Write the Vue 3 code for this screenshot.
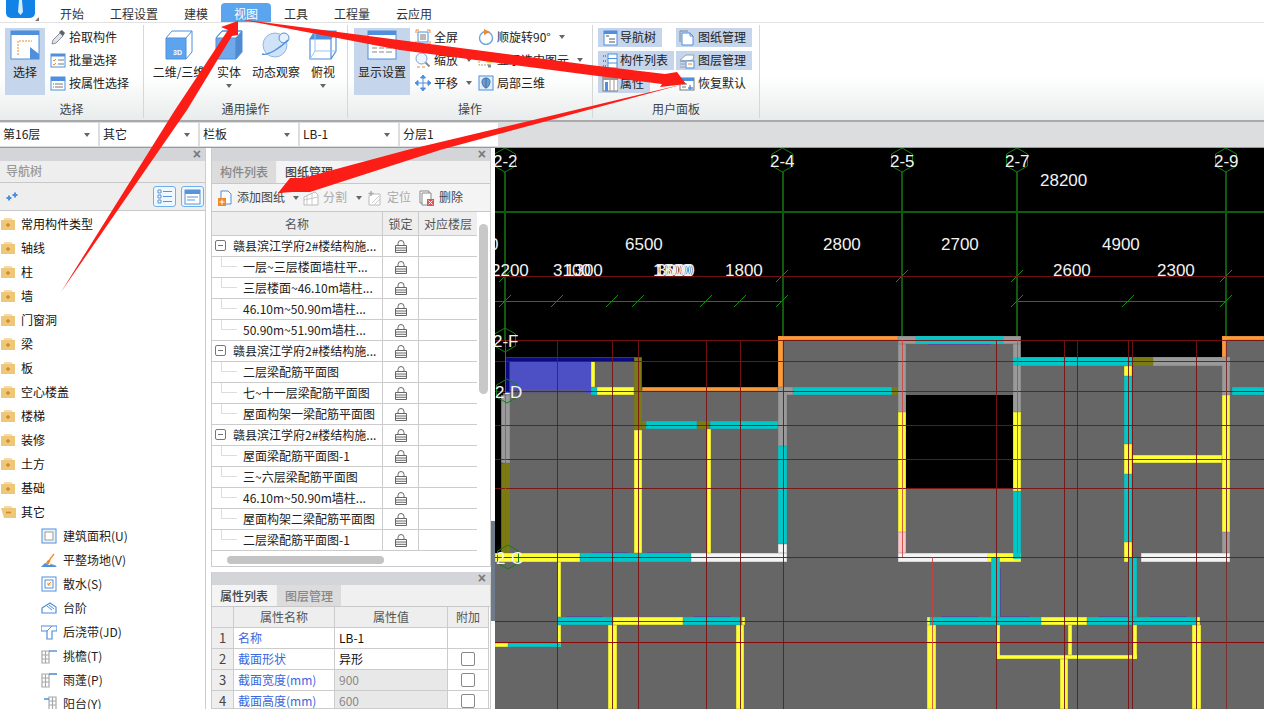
<script setup>
const tabs = ['开始', '工程设置', '建模', '视图', '工具', '工程量', '云应用']
const combos = ['第16层', '其它', '栏板', 'LB-1', '分层1']

const B = '#4f8fdc'
const O = '#ee8a2a'
const icons = {
  select: `<rect x="1" y="1" width="28" height="28" fill="#fff" stroke="${B}"/><rect x="1" y="1" width="28" height="4" fill="${B}"/><path d="M8 25V11h14" fill="none" stroke="${O}" stroke-dasharray="2 1"/><path d="M20 17l9 7v5h-9z" fill="${B}"/>`,
  cube3d: `<path d="M2 8h20v21H2z" fill="#5ea3ee" stroke="${B}"/><path d="M2 8l6-7h20v21l-6 7M22 8l6-7" fill="none" stroke="${B}"/><text x="9" y="25" font-size="7" font-weight="700" fill="#fff" font-family="Liberation Sans, sans-serif">3D</text>`,
  solid: `<path d="M2 8h20v21H2z" fill="#6fa9ea" stroke="${B}"/><path d="M2 8l6-7h20v21l-6 7V8l6-7H8z" fill="#4f8ad0" stroke="${B}"/>`,
  orbit: `<circle cx="14" cy="15" r="12" fill="#cfe2f6" stroke="#8db8e6"/><circle cx="23" cy="8" r="5" fill="#e7f1fb" stroke="${B}"/><path d="M1 24c6 2 18-6 26-14" fill="none" stroke="${B}" stroke-width="1.4"/>`,
  top: `<path d="M2 9h21v20H2zM2 9l5-8h21v20l-5 8M23 9l5-8" fill="none" stroke="${B}" stroke-width="1.2"/><path d="M2 9l5-8h21l-5 8z" fill="${B}"/><path d="M7 1v20h21M2 29l5-8" fill="none" stroke="#9cc2ec"/>`,
  display: `<rect x="1" y="1" width="28" height="28" fill="#fff" stroke="${B}"/><rect x="1" y="1" width="28" height="4" fill="${B}"/><path d="M5 10h5M12 10h5M19 10h6M5 14h5M12 14h5M19 14h6M5 18h5M12 18h5M19 18h6M5 22h5M12 22h5M19 22h6" stroke="#8a8a8a" stroke-width="1.2"/>`,
  picker: `<path d="M2 15l1-4 7-7 3 3-7 7z" fill="#dfe4ea" stroke="#8a8f96"/><path d="M9 3l3-2 3 3-2 3z" fill="#5c6168"/>`,
  batch: `<rect x="1" y="2" width="14" height="13" fill="#fff" stroke="${B}"/><rect x="1" y="2" width="14" height="2.5" fill="${B}"/><path d="M3 8l1 1 2-2M3 12l1 1 2-2" fill="none" stroke="${O}"/><path d="M8 8h6M8 12h6" stroke="#777"/>`,
  attrsel: `<rect x="1" y="2" width="14" height="13" fill="#fff" stroke="${B}"/><rect x="1" y="2" width="14" height="4" fill="${B}"/><path d="M5 9h8M5 12h8M3 9h1M3 12h1" stroke="#777"/>`,
  full: `<path d="M4 1H1v3M12 1h3v3M1 12v3h3M15 12v3h-3" fill="none" stroke="${O}"/><rect x="3" y="3" width="10" height="10" fill="#fff" stroke="${B}"/><path d="M5 6h6M5 8h6M5 10h6" stroke="#777"/>`,
  zoom: `<circle cx="6.5" cy="6.5" r="5.5" fill="#eef5fc" stroke="#6fa3dc"/><path d="M10.5 10.5l4 4" stroke="#8a8a8a" stroke-width="2"/><path d="M2 15h3M7 15h3" stroke="${O}"/>`,
  pan: `<path d="M8 0l2.5 3h-5zM8 16l-2.5-3h5zM0 8l3-2.5v5zM16 8l-3 2.5v-5zM3 8h10M8 3v10" fill="${B}" stroke="${B}"/>`,
  rotate: `<circle cx="8" cy="9" r="6.5" fill="#fff" stroke="#6fa3dc" stroke-width="1.4"/><path d="M6 0l6 3-6 3z" fill="${O}"/>`,
  bulb: `<path d="M1 3h9v10H1z" fill="#fff" stroke="#b9a06a" stroke-dasharray="2 1"/><circle cx="11.5" cy="8" r="3.5" fill="#f6d95a"/><path d="M10 12.5h3v3h-3z" fill="#888"/>`,
  local3d: `<rect x="1" y="1" width="14" height="14" fill="#e4effa" stroke="${B}"/><path d="M8 3c3 0 4 2 4 4s-2 6-4 6-4-4-4-6 1-4 4-4zM8 3v10" fill="#6d9ccf" stroke="#3f6fa8"/>`,
  nav: `<rect x="2" y="1" width="13" height="14" fill="#fff" stroke="${B}"/><rect x="2" y="1" width="13" height="3" fill="${B}"/><path d="M4 6h3M7 9h6M7 12h6" stroke="#555"/>`,
  list: `<rect x="6" y="1" width="9" height="14" fill="#fff" stroke="${B}"/><path d="M6 5.5h9M6 10h9" stroke="${B}"/><path d="M1 3h3M1 8h3M1 13h3" stroke="${B}" stroke-width="2" stroke-dasharray="1 1"/>`,
  prop: `<rect x="1" y="1" width="15" height="14" fill="#fff" stroke="#777"/><rect x="1" y="1" width="15" height="3" fill="#999"/><rect x="3" y="6" width="3" height="9" fill="${B}"/><path d="M8 4v11M12 4v11" stroke="#999"/>`,
  sheet: `<path d="M3 3h8l3 3v9H3z" fill="#fff" stroke="${B}"/><path d="M1 12V1h8" fill="none" stroke="#7a8696"/><path d="M11 3v3h3" fill="none" stroke="${B}"/>`,
  layer: `<path d="M1 7l6-5 8 0-1 5-6 1z" fill="#fff" stroke="#9aa2ab"/><path d="M1 11h5M1 8.5h5M1 14h5" stroke="#9aa2ab"/><rect x="7" y="8" width="8" height="7" fill="#fff" stroke="${B}"/><path d="M9 11h4" stroke="${O}"/>`,
  restore: `<rect x="1" y="2" width="14" height="12" fill="#fff" stroke="#777"/><rect x="1" y="2" width="14" height="3" fill="${B}"/><path d="M3 8h5M3 11h4" stroke="#777"/><path d="M11 9v5M9 12h5" stroke="${B}" stroke-width="1.4"/>`,
  foldclosed: `<path d="M3 1h7l2 2H3z" fill="#f4dba9"/><path d="M0 3h14v10H0z" fill="#efc779"/><path d="M5 8h4M7 6v4" stroke="#c98d2a" stroke-width="1.4"/>`,
  foldopen: `<path d="M3 1h7l2 2H3z" fill="#f4dba9"/><path d="M0 3h15v10H3z" fill="#efc779"/><path d="M5 7.5h5" stroke="#c98d2a" stroke-width="1.6"/>`,
  area: `<rect x="1" y="1" width="14" height="14" fill="#eef3fa" stroke="${B}"/><rect x="4" y="4" width="8" height="8" fill="#fff" stroke="#999"/>`,
  site: `<path d="M0 15l4-4 4 2 5 0 3 2z" fill="${B}"/><path d="M5 12c0-3 3-5 5-5l-2 5z" fill="${O}"/><path d="M9 7l4-5" stroke="${O}" stroke-width="1.3"/><path d="M9 12l6 2" stroke="#999"/>`,
  apron: `<rect x="1" y="1" width="14" height="14" fill="#fff" stroke="${B}"/><rect x="4" y="4" width="8" height="8" fill="#fff" stroke="${B}"/><path d="M10 6l-3 3M7 6.5V9h2.5" fill="none" stroke="${O}"/>`,
  step: `<path d="M1 8l8-5 6 4v6H1z" fill="#fff" stroke="${B}" stroke-width="1.2"/><path d="M6 6l5 4M8 5l5 4" stroke="${B}"/>`,
  band: `<path d="M0 2h16v5h-5v8H6V7H0z" fill="#fff" stroke="${B}" stroke-width="1.2"/><path d="M6 7l5-5" stroke="${B}"/>`,
  eave: `<path d="M1 3h7v12H1zM1 7h7M1 11h7M4.5 3v12" fill="none" stroke="#a8a8a8" stroke-width="1.2"/><path d="M8 3h8" stroke="${B}" stroke-width="1.4"/>`,
  canopy: `<path d="M1 2h7v13H1zM1 6h7M1 10h7M4.5 2v13" fill="none" stroke="#a8a8a8" stroke-width="1.2"/><path d="M8 2h8" stroke="${B}" stroke-width="1.6"/>`,
  balcony: `<path d="M8 1h7v14H8zM8 5h7M8 9h7M11.5 1v14" fill="none" stroke="#a8a8a8" stroke-width="1.2"/><path d="M3 3h5M0 15h8" stroke="${B}" stroke-width="1.4"/>`,
  addsheet: `<path d="M3 1h7l3 3v10H3z" fill="#fff" stroke="${B}"/><rect x="0" y="8" width="8" height="8" fill="${O}"/><path d="M4 9.5v5M1.5 12h5" stroke="#fff"/>`,
  split: `<path d="M1 15V7l11-5 3 3v10z" fill="#fff" stroke="#bbb"/><path d="M1 10l14-3M4 6v9M9 4v11" stroke="#c8c8c8"/>`,
  locate: `<path d="M4 4h9v11H2V6z" fill="#fff" stroke="#bbb"/><path d="M4 1v5M1.5 3.5h5" stroke="#aaa" stroke-width="1.4"/><path d="M5 13l7-7M8 14l5-5" stroke="#ccc"/>`,
  del: `<path d="M1 1h9v12H1z" fill="#fff" stroke="#888"/><path d="M3 3h9v12H3z" fill="#fff" stroke="#888"/><rect x="8" y="9" width="7" height="7" fill="#e25252"/><path d="M9.5 10.5l4 4M13.5 10.5l-4 4" stroke="#fff"/>`,
  listview: `<path d="M3 3h3v3H3zM3 8h3v3H3zM3 13h3v3H3z" fill="none" stroke="#5a93d8"/><path d="M8 4.5h9M8 9.5h9M8 14.5h9" stroke="#5a93d8" stroke-width="1.2"/>`,
  cardview: `<rect x="2" y="3" width="15" height="14" fill="#fff" stroke="#5a93d8"/><rect x="2" y="3" width="15" height="4" fill="#5a93d8"/><path d="M4 10h11M4 13h8" stroke="#5a93d8"/>`,
  plusplus: `<path d="M1 6h5M3.5 3.5v5" stroke="${B}" stroke-width="2"/><path d="M7 3h5M9.5 .5v5" stroke="${B}" stroke-width="2"/>`,
}

const pickItems = [
  { icon: 'picker', label: '拾取构件' },
  { icon: 'batch', label: '批量选择' },
  { icon: 'attrsel', label: '按属性选择' },
]
const generalBtns = [
  { icon: 'cube3d', label: '二维/三维', w: 52, ml: 9 },
  { icon: 'solid', label: '实体', w: 30, ml: 9, caret: true },
  { icon: 'orbit', label: '动态观察', w: 48, ml: 8 },
  { icon: 'top', label: '俯视', w: 30, ml: 8, caret: true },
]
const opCol1 = [
  { icon: 'full', label: '全屏' },
  { icon: 'zoom', label: '缩放', caret: true },
  { icon: 'pan', label: '平移', caret: true },
]
const opCol2 = [
  { icon: 'rotate', label: '顺旋转90°', caret: true },
  { icon: 'bulb', label: '显示选中图元', caret: true },
  { icon: 'local3d', label: '局部三维' },
]
const panelCol1 = [
  { icon: 'nav', label: '导航树', on: true },
  { icon: 'list', label: '构件列表', on: true },
  { icon: 'prop', label: '属性', on: true },
]
const panelCol2 = [
  { icon: 'sheet', label: '图纸管理', on: true },
  { icon: 'layer', label: '图层管理', on: true },
  { icon: 'restore', label: '恢复默认' },
]

const navFolders = ['常用构件类型', '轴线', '柱', '墙', '门窗洞', '梁', '板', '空心楼盖', '楼梯', '装修', '土方', '基础']
const navChildren = [
  { icon: 'area', label: '建筑面积(U)' },
  { icon: 'site', label: '平整场地(V)' },
  { icon: 'apron', label: '散水(S)' },
  { icon: 'step', label: '台阶' },
  { icon: 'band', label: '后浇带(JD)' },
  { icon: 'eave', label: '挑檐(T)' },
  { icon: 'canopy', label: '雨蓬(P)' },
  { icon: 'balcony', label: '阳台(Y)' },
]

const sheetRows = [
  { top: true, name: '赣县滨江学府2#楼结构施...' },
  { name: '一层~三层楼面墙柱平...' },
  { name: '三层楼面~46.10m墙柱...' },
  { name: '46.10m~50.90m墙柱...' },
  { name: '50.90m~51.90m墙柱...' },
  { top: true, name: '赣县滨江学府2#楼结构施...' },
  { name: '二层梁配筋平面图' },
  { name: '七~十一层梁配筋平面图' },
  { name: '屋面构架一梁配筋平面图' },
  { top: true, name: '赣县滨江学府2#楼结构施...' },
  { name: '屋面梁配筋平面图-1' },
  { name: '三~六层梁配筋平面图' },
  { name: '46.10m~50.90m墙柱...' },
  { name: '屋面构架二梁配筋平面图' },
  { name: '二层梁配筋平面图-1' },
]

const propRows = [
  { name: '名称', value: 'LB-1' },
  { name: '截面形状', value: '异形', check: true },
  { name: '截面宽度(mm)', value: '900', check: true, off: true },
  { name: '截面高度(mm)', value: '600', check: true, off: true },
]

// drawing colours
const Y = '#ffff33'
const C = '#00c8c8'
const W = '#f4f4f4'
const G = '#9a9a9a'
const L = '#7c7a12'
const R = '#ff9933'
// x, y, w, h, colour — page coordinates
const walls = [
  [501, 395, 9, 68, G], [501, 463, 9, 90, L],
  [591, 361, 4, 26, Y], [591, 387, 6, 8, C], [597, 387, 37, 8, Y],
  [634, 357, 8, 73, L], [642, 421, 4, 8, L], [634, 430, 8, 123, Y],
  [642, 387, 136, 4, R], [646, 421, 51, 8, C], [697, 421, 13, 8, L], [710, 421, 68, 8, C],
  [707, 429, 4, 124, Y], [778, 336, 5, 51, R], [778, 336, 120, 4, R],
  [778, 387, 9, 59, G], [778, 446, 9, 98, C], [778, 544, 9, 9, W],
  [783, 387, 10, 8, G], [793, 387, 99, 8, C], [892, 387, 6, 8, L],
  [495, 553, 85, 9, Y], [580, 553, 111, 9, C], [691, 553, 96, 9, W],
  [557, 562, 4, 55, Y], [557, 617, 56, 8, C], [613, 617, 70, 8, Y], [683, 617, 59, 8, C], [742, 617, 3, 8, Y],
  [557, 625, 4, 22, Y], [495, 643, 13, 4, Y], [508, 643, 53, 4, C],
  [608, 625, 9, 84, Y], [736, 625, 8, 84, Y],
  [898, 336, 123, 8, G], [915, 336, 89, 8, C],
  [898, 344, 8, 68, G], [898, 412, 8, 120, Y], [898, 532, 8, 21, '#f6c8c8'], [898, 553, 90, 9, W],
  [987, 553, 34, 9, Y], [1013, 344, 8, 68, G], [1013, 412, 8, 79, Y], [1013, 491, 8, 68, C],
  [1013, 357, 120, 9, C], [1133, 357, 20, 9, L], [1153, 357, 77, 9, G],
  [1222, 357, 8, 38, G], [1222, 395, 8, 137, Y], [1222, 532, 8, 21, G], [1141, 553, 89, 9, W],
  [1222, 336, 4, 21, R], [1222, 336, 42, 4, R], [1232, 387, 32, 8, C],
  [1124, 366, 8, 10, Y], [1124, 376, 8, 68, C], [1124, 444, 8, 30, Y], [1124, 474, 8, 68, C], [1124, 542, 8, 20, Y],
  [1132, 455, 90, 8, Y], [991, 557, 9, 60, C], [1128, 557, 9, 60, C],
  [927, 617, 3, 8, Y], [930, 617, 111, 8, C], [1041, 617, 46, 8, Y], [1087, 617, 110, 8, C], [1197, 617, 3, 8, Y],
  [927, 625, 9, 84, Y], [1192, 625, 9, 84, Y],
  [996, 625, 4, 34, Y], [996, 655, 141, 4, Y], [1133, 625, 4, 34, Y], [1068, 625, 4, 30, Y], [1060, 659, 8, 50, Y],
]
const purple = ['M928 344.500H991', 'M592 552.500H628', 'M647 552.500H680', 'M566 616.500H603', 'M694 616.500H731', 'M941 616.500H978', 'M1001 616.500H1029', 'M1099 616.500H1128', 'M1150 616.500H1187', 'M1000.500 568V617']
const gridH = [276, 340, 361, 391, 425, 459, 488, 557, 621]
const gridV = [557, 612, 638, 706, 740, 783, 996, 1064, 1077, 1128, 1132, 1196]
const axes = [
  { x: 505, y: 160, t: '2-2', tx: 493, ty: 167 },
  { x: 782.500, y: 160, t: '2-4', tx: 770, ty: 167 },
  { x: 902, y: 160, t: '2-5', tx: 890, ty: 167 },
  { x: 1017, y: 160, t: '2-7', tx: 1005, ty: 167 },
  { x: 1226, y: 160, t: '2-9', tx: 1214, ty: 167 },
  { x: 505, y: 340, t: '2-F', tx: 493, ty: 347 },
  { x: 507, y: 391, t: '2-D', tx: 495, ty: 398 },
  { x: 508, y: 557, t: '2-C', tx: 496, ty: 564 },
]
const hexPoints = (x, y) => [[0, -12], [10.500, -6], [10.500, 6], [0, 12], [-10.500, 6], [-10.500, -6]]
  .map(p => `${x + p[0]},${y + p[1]}`).join(' ')
const ticks = [
  [505, 301], [557, 301], [612, 301], [638, 301], [706, 301], [740, 301], [782, 301],
  [1017, 301], [1128, 301], [1226, 301],
  [505, 276], [782, 276], [902, 276], [1017, 276], [1226, 276],
]
const dims = [
  ['0', 489, 250], ['6500', 625, 250], ['2800', 823, 250], ['2700', 941, 250], ['4900', 1102, 250],
  ['28200', 1040, 186], ['2200', 491, 276], ['3100', 553, 276], ['1300', 565, 276],
  ['1300', 653, 276], ['1600', 655, 276], ['3000', 657, 276], ['1800', 725, 276],
  ['2600', 1053, 276], ['2300', 1157, 276],
]
</script>

<template>
  <div class="app">
    <header class="tabbar">
      <div class="logo">
        <svg width="30" height="19" viewBox="0 0 30 19">
          <rect x="0" y="-10" width="29" height="28" rx="5" fill="#1183e6" />
          <path d="M13 0h3l1 12-2.500 3L12 12z" fill="#d5ecfb" />
        </svg>
        <i class="logo-corner" />
      </div>
      <span v-for="t in tabs" :key="t" class="tab" :class="{ active: t === '视图' }">{{ t }}</span>
    </header>

    <section class="ribbon">
      <div class="group g1">
        <div class="group-body">
          <div class="big on sel">
            <svg width="30" height="30" viewBox="0 0 30 30" v-html="icons.select" />
            <span>选择</span>
          </div>
          <div class="col">
            <div v-for="it in pickItems" :key="it.label" class="small">
              <svg width="16" height="16" viewBox="0 0 16 16" v-html="icons[it.icon]" />{{ it.label }}
            </div>
          </div>
        </div>
        <div class="group-label">选择</div>
      </div>

      <div class="group g2">
        <div class="group-body">
          <div v-for="b in generalBtns" :key="b.label" class="big" :style="{ width: b.w + 'px', marginLeft: b.ml + 'px' }">
            <svg width="30" height="30" viewBox="0 0 30 30" v-html="icons[b.icon]" />
            <span>{{ b.label }}</span>
            <i v-if="b.caret" class="caret" />
          </div>
        </div>
        <div class="group-label">通用操作</div>
      </div>

      <div class="group g3">
        <div class="group-body">
          <div class="big on disp">
            <svg width="30" height="30" viewBox="0 0 30 30" v-html="icons.display" />
            <span>显示设置</span>
          </div>
          <div class="col c-ops">
            <div v-for="it in opCol1" :key="it.label" class="small">
              <svg width="16" height="16" viewBox="0 0 16 16" v-html="icons[it.icon]" />{{ it.label }}<i v-if="it.caret" class="caret side" />
            </div>
          </div>
          <div class="col">
            <div v-for="it in opCol2" :key="it.label" class="small">
              <svg width="16" height="16" viewBox="0 0 16 16" v-html="icons[it.icon]" />{{ it.label }}<i v-if="it.caret" class="caret side" />
            </div>
          </div>
        </div>
        <div class="group-label">操作</div>
      </div>

      <div class="group g4">
        <div class="group-body">
          <div class="col c-panel">
            <div v-for="it in panelCol1" :key="it.label" class="small pill" :class="{ on: it.on }">
              <svg width="16" height="16" viewBox="0 0 16 16" v-html="icons[it.icon]" />{{ it.label }}
            </div>
          </div>
          <div class="col">
            <div v-for="it in panelCol2" :key="it.label" class="small pill" :class="{ on: it.on }">
              <svg width="16" height="16" viewBox="0 0 16 16" v-html="icons[it.icon]" />{{ it.label }}
            </div>
          </div>
        </div>
        <div class="group-label">用户面板</div>
      </div>
    </section>

    <section class="combos">
      <div v-for="c in combos" :key="c" class="combo">
        <span>{{ c }}</span><i v-if="c !== '分层1'" class="caret" />
      </div>
    </section>

    <main class="main">
      <aside class="nav">
        <div class="closebar"><span class="x">×</span></div>
        <div class="nav-title">导航树</div>
        <div class="nav-tools">
          <svg width="14" height="10" viewBox="0 0 13 10" v-html="icons.plusplus" />
          <div class="nav-views">
            <span class="viewbtn"><svg width="19" height="19" viewBox="0 0 19 19" v-html="icons.listview" /></span>
            <span class="viewbtn"><svg width="19" height="19" viewBox="0 0 19 19" v-html="icons.cardview" /></span>
          </div>
        </div>
        <div class="nav-list">
          <div v-for="f in navFolders" :key="f" class="nav-row">
            <svg width="15" height="14" viewBox="0 0 15 14" v-html="icons.foldclosed" />{{ f }}
          </div>
          <div class="nav-row">
            <svg width="15" height="14" viewBox="0 0 15 14" v-html="icons.foldopen" />其它
          </div>
          <div v-for="c in navChildren" :key="c.label" class="nav-row child">
            <svg width="16" height="16" viewBox="0 0 16 16" v-html="icons[c.icon]" />{{ c.label }}
          </div>
        </div>
      </aside>

      <div class="middle">
        <section class="panel sheets">
          <div class="closebar"><span class="x">×</span></div>
          <div class="ptabs">
            <span class="ptab">构件列表</span>
            <span class="ptab on">图纸管理</span>
          </div>
          <div class="ptools">
            <span class="ptool t-add"><svg width="16" height="16" viewBox="0 0 16 16" v-html="icons.addsheet" />添加图纸<i class="caret side" /></span>
            <span class="ptool off t-split"><svg width="16" height="16" viewBox="0 0 16 16" v-html="icons.split" />分割<i class="caret side" /></span>
            <span class="ptool off t-loc"><svg width="16" height="16" viewBox="0 0 16 16" v-html="icons.locate" />定位</span>
            <span class="ptool"><svg width="16" height="16" viewBox="0 0 16 16" v-html="icons.del" />删除</span>
          </div>
          <div class="sheet-table">
            <div class="s-row s-head">
              <span>名称</span><span>锁定</span><span>对应楼层</span>
            </div>
            <div v-for="(r, i) in sheetRows" :key="i" class="s-row">
              <span class="s-name" :class="{ top: r.top }">
                <i v-if="r.top" class="expander" />
                <i v-else class="branch" />
                {{ r.name }}
              </span>
              <span class="s-lock">
                <svg width="12" height="13" viewBox="0 0 12 13">
                  <path d="M3 6V3.500a3 3 0 0 1 6 0V6" fill="none" stroke="#666" />
                  <path d="M.5 5.500h11v7H.5zM.5 8h11M.5 10.300h11" fill="#fff" stroke="#666" />
                </svg>
              </span>
              <span />
            </div>
          </div>
          <div class="vscroll" />
          <div class="hscroll" />
        </section>

        <section class="panel props">
          <div class="closebar"><span class="x">×</span></div>
          <div class="ptabs">
            <span class="ptab on">属性列表</span>
            <span class="ptab">图层管理</span>
          </div>
          <div class="p-row p-head">
            <span /><span>属性名称</span><span>属性值</span><span>附加</span>
          </div>
          <div v-for="(r, i) in propRows" :key="r.name" class="p-row">
            <span class="p-idx">{{ i + 1 }}</span>
            <span class="p-name">{{ r.name }}</span>
            <span class="p-val" :class="{ off: r.off }">{{ r.value }}</span>
            <span class="p-chk"><i v-if="r.check" class="check" /></span>
          </div>
        </section>
      </div>

      <div class="splitter"><i class="split-grip" /></div>

      <div class="canvas">
        <svg width="769" height="561" viewBox="495 148 769 561">
          <rect x="495" y="148" width="769" height="561" fill="#000" />
          <path d="M506 357H636V390H778V336H1020V357H1222V336H1264V709H495V553H503V393H506Z" fill="#666" />
          <rect x="906" y="395" width="107" height="93" fill="#000" />
          <rect x="506" y="357" width="85" height="36" fill="#4d4fc4" />
          <path d="M506 359.500H636M507.500 358V392" stroke="#0b0b80" stroke-width="4" fill="none" />
          <path d="M510 391.500H586" stroke="#5e5a7e" stroke-width="4" fill="none" />
          <rect
            v-for="(w, i) in walls"
            :key="i"
            :x="w[0] + 0.5"
            :y="w[1] + 0.5"
            :width="w[2] - 1"
            :height="w[3] - 1"
            :fill="w[4]"
            :stroke="w[4]"
            stroke-opacity="0.6"
          />
          <path v-for="(d, i) in purple" :key="'p' + i" :d="d" stroke="#5c4c8c" fill="none" />

          <rect x="495" y="211" width="769" height="2" fill="#0f5a0f" />
          <path d="M495 301.500H782.500M1017 301.500H1226" stroke="#0f7f0f" fill="none" />
          <g fill="#0f5a0f">
            <rect x="504" y="172" width="2" height="168" />
            <rect x="782" y="172" width="2" height="164" />
            <rect x="901" y="172" width="2" height="164" />
            <rect x="1016" y="172" width="2" height="164" />
            <rect x="1225" y="172" width="2" height="164" />
          </g>
          <path
            v-for="(t, i) in ticks"
            :key="'t' + i"
            :d="`M${t[0] - 6} ${t[1] + 6}L${t[0] + 6} ${t[1] - 6}`"
            stroke="#128a12"
            fill="none"
          />

          <g stroke="#7a1414" fill="none" stroke-opacity="0.92">
            <path v-for="y in gridH" :key="'h' + y" :d="`M495 ${y + 0.5}H1264`" />
            <path v-for="x in gridV" :key="'v' + x" :d="`M${x + 0.5} 340V709`" />
            <path d="M495 642.500H1264" stroke="#8c0000" />
          </g>
          <g stroke="#d04040" fill="none" stroke-opacity="0.85">
            <path d="M505.500 340V553M902.500 340V557M1017.500 340V553M932.500 557V709" />
          </g>
          <path d="M1226.500 340V709" stroke="#7a3030" fill="none" />

          <g v-for="a in axes" :key="a.t">
            <polygon :points="hexPoints(a.x, a.y)" fill="none" stroke="#128012" />
            <text :x="a.tx" :y="a.ty" class="cad">{{ a.t }}</text>
          </g>
          <text v-for="(d, i) in dims" :key="'d' + i" :x="d[1]" :y="d[2]" class="cad">{{ d[0] }}</text>
        </svg>
      </div>
    </main>

    <!-- annotation arrows drawn over the screenshot -->
    <svg class="arrows" width="1264" height="709" viewBox="0 0 1264 709">
      <path d="M61 292L175 110L228 30L221 27L238 21L238 35L232 36L187 110Z" fill="#fb1d16" />
      <path d="M238 19L590 65L665 74L677 72L686 84L660 87L662 84L590 75L400 50Z" fill="#fb1d16" />
      <path d="M684 84L407 150L303 178L290 178L278 193L293 192L310 192L440 150Z" fill="#fb1d16" />
    </svg>
  </div>
</template>

<style>
html, body { margin: 0; background: #fff; overflow: hidden; }
</style>

<style scoped>
.app {
  position: relative;
  width: 1264px;
  height: 709px;
  overflow: hidden;
  display: flex;
  flex-direction: column;
  background: #fff;
  color: #222;
  font: 12px/1.2 "Noto Sans CJK SC", "Noto Sans", sans-serif;
}
svg { flex: none; display: block; }
i { display: block; font-style: normal; }

.tabbar {
  height: 23px;
  flex: none;
  display: flex;
  align-items: flex-end;
  box-sizing: border-box;
  border-bottom: 1px solid #e2e2e2;
}
.logo { position: relative; width: 47px; height: 22px; align-self: flex-start; padding-left: 6px; box-sizing: border-box; }
.logo-corner {
  position: absolute;
  left: 35px;
  top: 17px;
  border-left: 4px solid transparent;
  border-bottom: 4px solid #777;
}
.tab { height: 19px; line-height: 21px; padding: 0 13px; border-radius: 4px 4px 0 0; color: #333; }
.tab.active { background: #5aa5ee; color: #fff; }

.ribbon {
  height: 97px;
  flex: none;
  display: flex;
  background: linear-gradient(#fff 55%, #e9ecec);
}
.group {
  flex: none;
  display: flex;
  flex-direction: column;
  box-sizing: border-box;
  border-right: 1px solid #d6d8d8;
  margin: 2px 0 2px;
}
.g1 { width: 144px; }
.g2 { width: 204px; }
.g3 { width: 245px; }
.g4 { width: 167px; }
.group-body { flex: 1; display: flex; padding-top: 3px; }
.group-label { height: 18px; line-height: 18px; text-align: center; color: #444; }
.big { position: relative; flex: none; height: 67px; display: flex; flex-direction: column; align-items: center; padding-top: 2px; box-sizing: border-box; white-space: nowrap; }
.big span { margin-top: 5px; }
.big.on { background: #c5d5ec; }
.sel { width: 40px; margin: 0 5px; }
.disp { width: 56px; margin: 0 5px 0 6px; }
.col { display: flex; flex-direction: column; gap: 7px; padding-top: 1px; }
.c-ops { width: 63px; }
.c-panel { width: 78px; margin-left: 5px; }
.small {
  height: 16px;
  display: flex;
  align-items: center;
  gap: 3px;
  white-space: nowrap;
}
.pill { height: 19px; padding: 0 6px 0 3px; width: fit-content; }
.c-panel .pill { gap: 2px; padding-left: 4px; }
.g4 .col { gap: 4px; padding-top: 0; }
.pill.on { background: #c5d5ec; }
.caret {
  width: 0;
  height: 0;
  border-left: 3.500px solid transparent;
  border-right: 3.500px solid transparent;
  border-top: 4px solid #666;
}
.big .caret { margin-top: 5px; }
.caret.side { margin-left: 5px; }

.combos {
  height: 28px;
  flex: none;
  display: flex;
  gap: 2px;
  padding: 1px 0;
  box-sizing: border-box;
  background: #dcdddf;
  border-top: 2px solid #a9a9a9;
  border-bottom: 1px solid #9a9a9a;
}
.combo {
  width: 98px;
  box-sizing: border-box;
  background: #fff;
  display: flex;
  align-items: center;
  justify-content: space-between;
  padding: 0 8px 0 3px;
  color: #222;
}

.main { flex: 1; display: flex; min-height: 0; }
.closebar { height: 13px; background: #d3d5d9; position: relative; flex: none; }
.x { position: absolute; right: 4px; top: -1px; color: #777; font: 700 14px/15px "Liberation Sans", sans-serif; }

.nav { width: 206px; flex: none; box-sizing: border-box; border-right: 1px solid #ccc; overflow: hidden; }
.nav-title { height: 21px; line-height: 20px; padding-left: 6px; color: #999; background: #eee; border-bottom: 1px solid #c8c8c8; font-weight: 500; }
.nav-tools { height: 27px; display: flex; align-items: center; justify-content: space-between; padding-left: 5px; background: #eee; border-bottom: 1px solid #c8c8c8; }
.nav-views { display: flex; gap: 5px; margin-right: 1px; }
.viewbtn { width: 23px; height: 21px; box-sizing: border-box; border: 1px solid #6eb0ee; border-radius: 3px; background: #f0f7fe; display: flex; align-items: center; justify-content: center; }
.nav-list { padding-top: 1px; }
.nav-row { height: 24px; display: flex; align-items: center; gap: 5px; padding-left: 1px; white-space: nowrap; color: #111; }
.nav-row.child { padding-left: 41px; gap: 6px; color: #222; }

.middle { width: 280px; margin-left: 5px; flex: none; display: flex; flex-direction: column; gap: 5px; }
.panel { position: relative; box-sizing: border-box; border: 1px solid #ccc; border-top: 0; background: #fff; }
.sheets { height: 419px; }
.props { flex: 1; min-height: 0; overflow: hidden; }
.ptabs { height: 23px; display: flex; background: #f0f0f0; border-bottom: 1px solid #c8c8c8; box-sizing: border-box; gap: 1px; }
.props .ptabs { height: 22px; }
.ptab { width: 64px; text-align: center; line-height: 22px; background: #dcdcdc; color: #888; font-weight: 500; }
.ptab.on { background: #f4f4f4; color: #444; }
.ptools { height: 28px; display: flex; align-items: center; padding-left: 6px; background: #f4f4f4; border-bottom: 1px solid #c8c8c8; box-sizing: border-box; color: #444; }
.ptool { display: flex; align-items: center; gap: 4px; white-space: nowrap; }
.ptool.off { color: #aaa; }
.t-add { width: 85px; gap: 3px; }
.t-split { width: 64px; }
.t-loc { width: 52px; }
.sheet-table { width: 265px; }
.s-row { display: grid; grid-template-columns: 171px 36px 58px; height: 21px; border-bottom: 1px solid #ccc; box-sizing: border-box; }
.s-row > span { border-right: 1px solid #ccc; }
.s-row > span:last-child { border-right: 0; }
.s-head { height: 24px; background: #eee; color: #555; text-align: center; line-height: 23px; }
.s-name { position: relative; display: flex; align-items: center; padding-left: 31px; white-space: nowrap; overflow: hidden; color: #222; }
.s-name.top { padding-left: 21px; }
.expander { position: absolute; left: 3px; top: 4px; width: 11px; height: 11px; box-sizing: border-box; border: 1px solid #777; border-radius: 2px; background: linear-gradient(#777, #777) center / 5px 1px no-repeat #fff; }
.branch { position: absolute; left: 9px; top: -1px; width: 16px; height: 11px; box-sizing: border-box; border-left: 1px solid #ddd; border-bottom: 1px solid #ddd; }
.s-lock { display: flex; align-items: center; justify-content: center; }
.vscroll { position: absolute; left: 267px; top: 76px; width: 9px; height: 170px; border-radius: 5px; background: #c8c8c8; }
.hscroll { position: absolute; left: 15px; top: 408px; width: 157px; height: 8px; border-radius: 4px; background: #c4c4c4; }
.p-row { display: grid; grid-template-columns: 22px 101px 113px 41px; height: 21px; width: 277px; border-bottom: 1px solid #ccc; box-sizing: border-box; }
.p-row > span { border-right: 1px solid #ccc; display: flex; align-items: center; padding-left: 4px; }
.p-head { background: #eee; color: #555; }
.p-head > span { justify-content: center; padding-left: 0; }
.p-idx { background: #eee; justify-content: center; padding-left: 0 !important; color: #444; font-size: 13px; }
.p-name { color: #3a66e0; }
.p-val { color: #111; }
.p-val.off { background: #e8e8e8; color: #888; }
.p-chk { justify-content: center; padding-left: 0 !important; }
.check { width: 14px; height: 14px; box-sizing: border-box; border: 1px solid #888; border-radius: 2px; background: #fff; }

.splitter { width: 4px; flex: none; background: #fff; position: relative; }
.split-grip { position: absolute; left: 0; top: 373px; width: 4px; height: 100px; background: #6d7b8b; }
.canvas { flex: 1; min-width: 0; overflow: hidden; background: #000; }
.cad { fill: #f2f2f2; font: 17px "Liberation Sans", sans-serif; }

.arrows { position: absolute; left: 0; top: 0; pointer-events: none; }
</style>
